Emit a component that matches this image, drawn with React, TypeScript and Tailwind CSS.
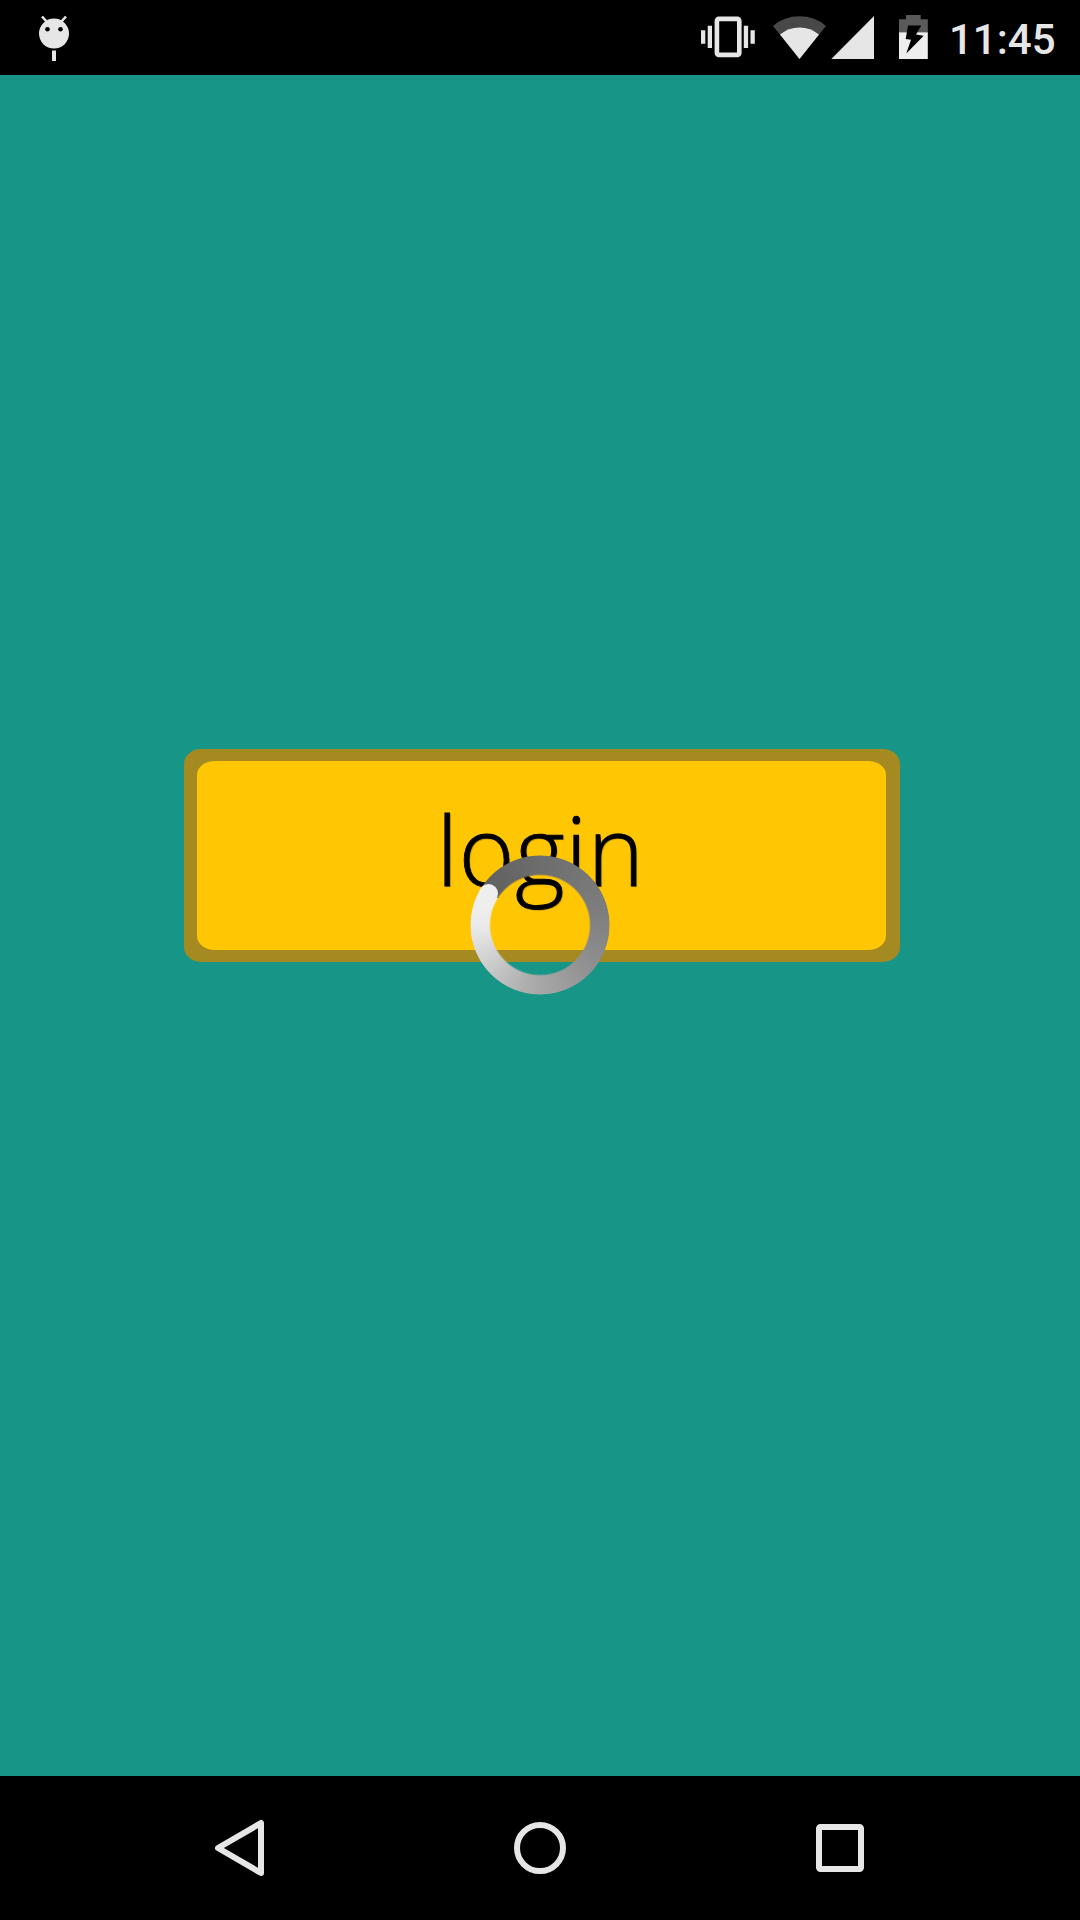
function DebugIcon() {
  return (
    <svg className="ml-[38px] mt-[15px] h-[48px] w-8 shrink-0" viewBox="38 15 32 48" fill="#e6e6e6">
      <path d="M42 16.500 47 22M66 16.500 61 22" stroke="#e6e6e6" strokeWidth="2.600" />
      <circle cx="54" cy="33.600" r="15" />
      <circle cx="47.500" cy="29.300" r="2.300" fill="#000" />
      <circle cx="60.500" cy="29.300" r="2.300" fill="#000" />
      <path d="M52 50.500h4V61h-4z" />
    </svg>
  );
}

function VibrateIcon() {
  return (
    <svg className="h-[43px] w-[54px]" viewBox="701 16 54 43" fill="#e6e6e6">
      <path d="M701 30.200h4.300v13.600H701zM707.700 25.700h4.300V48h-4.300zM743.800 25.700h4.300V48h-4.300zM750.500 30.200h4.300v13.600h-4.300z" />
      <rect x="716.900" y="18.900" width="22.400" height="36" rx="2" fill="none" stroke="#e6e6e6" strokeWidth="4.600" />
    </svg>
  );
}

function WifiIcon() {
  return (
    <svg className="ml-[18px] h-[43px] w-[54px]" viewBox="773 16 54 43">
      <path d="M799.500 59 773 26Q784 16.300 799.500 16.300T826 26z" fill="#484848" />
      <path d="M799.500 59 780 34.500Q788.500 27.500 799.500 27.500T819 34.500z" fill="#e6e6e6" />
    </svg>
  );
}

function SignalIcon() {
  return (
    <svg className="ml-1 h-[43px] w-[43px]" viewBox="831 16 43 43">
      <path d="M831.300 59H874V16z" fill="#e6e6e6" />
    </svg>
  );
}

function BatteryIcon() {
  return (
    <svg className="-mt-px ml-[25px] h-[44px] w-[29px]" viewBox="899 15 29 44">
      <path d="M899 19.200h7V15h14.700v4.200h7.100v13.300H899z" fill="#5a5a5a" />
      <path d="M899 32.300h28.800V59H899z" fill="#eee" />
      <path d="M908 25.500h13.300L916 34.500l7.700 1.300L906.300 53.500 911 39.800l-5.300-.8z" fill="#000" />
    </svg>
  );
}

function StatusBar() {
  return (
    <header className="flex h-[75px] shrink-0 items-start justify-between bg-black">
      <DebugIcon />
      <div className="mr-[24px] flex items-start pt-4">
        <VibrateIcon />
        <WifiIcon />
        <SignalIcon />
        <BatteryIcon />
        <span className="ml-[21px] mt-px w-[107px] whitespace-nowrap font-['Roboto',sans-serif] text-[42px] font-medium leading-[46px] text-[#e6e6e6]">
          11:45
        </span>
      </div>
    </header>
  );
}

function Spinner() {
  return (
    <div className="absolute left-[286px] top-[106px] size-[140px]">
      <div className="size-full rounded-full bg-[conic-gradient(from_302deg,#606060_0deg,#6c6c6c_55deg,#7f7f7f_140deg,#939393_195deg,#adadad_250deg,#cccccc_290deg,#e9e9e9_325deg,#f1f1f1_360deg)] [mask-image:radial-gradient(circle_closest-side,transparent_49px,black_51px,black_69px,transparent_70px)]" />
      <div className="absolute left-[9px] top-[29px] size-[19px] rounded-full bg-[#eeeeee] blur-[0.5px]" />
    </div>
  );
}

function NavigationBar() {
  return (
    <nav className="flex h-[144px] shrink-0 items-center justify-center gap-[200px] bg-black">
      <svg className="h-[60px] w-[100px]" viewBox="190 1818 100 60" fill="none" stroke="#e6e6e6" strokeWidth="6" strokeLinejoin="round">
        <path d="M261 1823v50L218 1848z" />
      </svg>
      <svg className="h-[60px] w-[100px]" viewBox="490 1818 100 60">
        <circle cx="540" cy="1848" r="23" fill="none" stroke="#e6e6e6" strokeWidth="6" />
      </svg>
      <svg className="h-[60px] w-[100px]" viewBox="790 1818 100 60">
        <rect x="819" y="1827" width="42" height="42" rx="1.500" fill="none" stroke="#e6e6e6" strokeWidth="6" />
      </svg>
    </nav>
  );
}

export default function App() {
  return (
    <div className="flex h-[1920px] w-[1080px] flex-col overflow-hidden bg-[#179587]">
      <StatusBar />
      <main className="flex grow flex-col items-start">
        <div className="relative ml-[184px] mt-[674px] h-[213px] w-[716px]">
          <button className="flex size-full rounded-[17px/15px] bg-[#a58a22] pb-3 pl-[13px] pr-[14px] pt-3">
            <span className="flex size-full items-start justify-center rounded-[18px/14px] bg-[#ffc603] pr-[2px] pt-[33px] font-['Open_Sans',sans-serif] text-[95px] font-[350] leading-[110px] tracking-[0.8px] text-black [-webkit-text-stroke:0.9px_black] [text-shadow:1px_1px_1px_rgba(0,0,0,0.3)]">
              login
            </span>
          </button>
          <Spinner />
        </div>
      </main>
      <NavigationBar />
    </div>
  );
}
